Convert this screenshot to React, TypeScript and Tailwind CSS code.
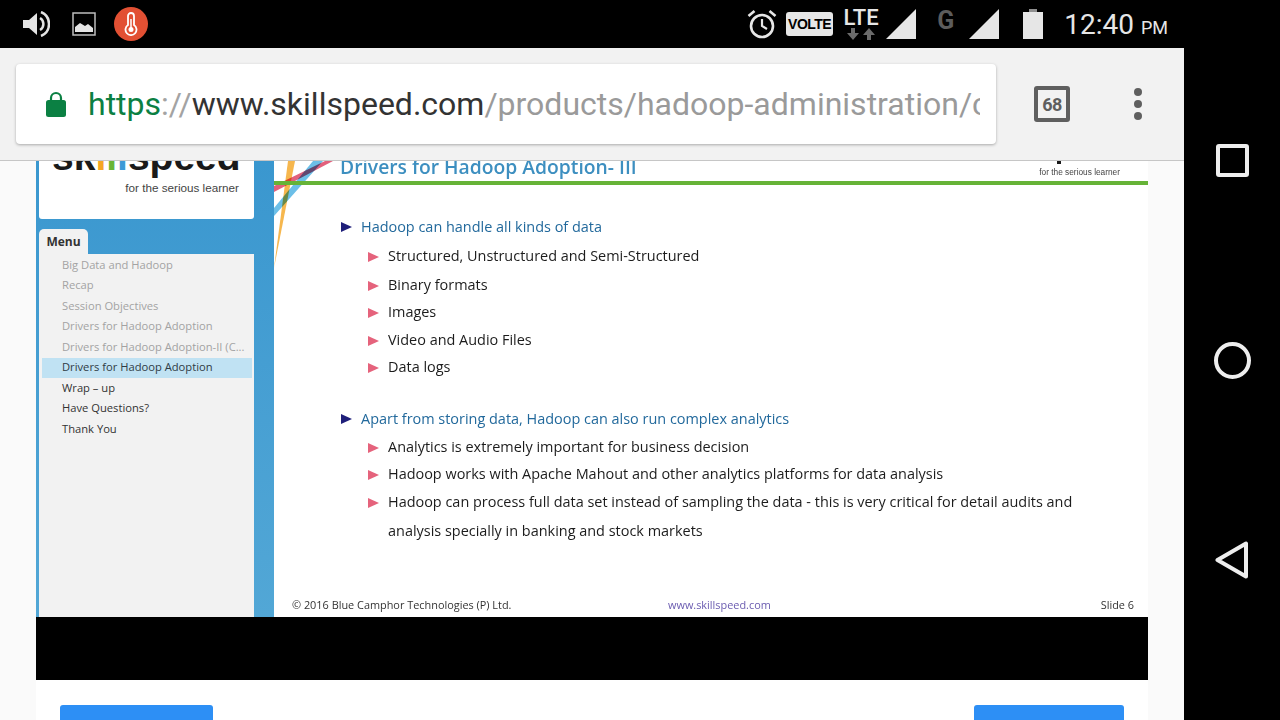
const topics = [
  { label: 'Big Data and Hadoop', cls: 'text-[#a3a3a3]' },
  { label: 'Recap', cls: 'text-[#a3a3a3]' },
  { label: 'Session Objectives', cls: 'text-[#a3a3a3]' },
  { label: 'Drivers for Hadoop Adoption', cls: 'text-[#a3a3a3]' },
  { label: 'Drivers for Hadoop Adoption-II (C...', cls: 'text-[#a3a3a3]' },
  { label: 'Drivers for Hadoop Adoption', cls: 'text-[#2f3b45] bg-[#c0e2f3]' },
  { label: 'Wrap – up', cls: 'text-[#333333]' },
  { label: 'Have Questions?', cls: 'text-[#333333]' },
  { label: 'Thank You', cls: 'text-[#333333]' },
];

function Arrow({ color, className }: { color: string; className?: string }) {
  return (
    <svg width="11" height="10" viewBox="0 0 11 10" className={`shrink-0 ${className ?? ''}`}>
      <path d="M0 0 L11 5 L0 10 Z" fill={color} />
    </svg>
  );
}

function Heading({ text, className }: { text: string; className: string }) {
  return (
    <div className={`flex h-5 items-center gap-[9px] pl-[67px] text-[14.450px] text-[#22699c] ${className}`}>
      <Arrow color="#1f1f7a" />
      <span>{text}</span>
    </div>
  );
}

function Point({ text, className }: { text: string; className: string }) {
  return (
    <div className={`flex h-5 items-center gap-[9px] pl-[94px] text-[14.450px] text-[#1c1c1c] ${className}`}>
      <Arrow color="#e5637c" className="mt-[2px]" />
      <span>{text}</span>
    </div>
  );
}

function StatusBar() {
  return (
    <div className="flex h-12 items-center justify-between bg-black pl-[22px] pr-4">
      <div className="flex items-center">
        <svg width="28" height="26" viewBox="0 0 28 26">
          <path d="M1 9h6l8-7v22l-8-7H1z" fill="#e4e4e4" />
          <path d="M18 7a7 7 0 0 1 0 12" fill="none" stroke="#e4e4e4" strokeWidth="2.5" />
          <path d="M19 1a13 13 0 0 1 0 24" fill="none" stroke="#e4e4e4" strokeWidth="2.5" />
        </svg>
        <svg width="24" height="24" viewBox="0 0 24 24" className="ml-[22px]">
          <rect x="1" y="1" width="22" height="22" fill="none" stroke="#bdbdbd" strokeWidth="1.5" />
          <path d="M3 20v-5l5-4 5 3 3-2 5 4v4z" fill="#e4e4e4" />
        </svg>
        <div className="ml-[18px] flex h-[34px] w-[34px] items-center justify-center rounded-full bg-[#e25033]">
          <svg width="14" height="24" viewBox="0 0 14 24">
            <path d="M4 13V4a3 3 0 0 1 6 0v9a5.5 5.5 0 1 1-6 0z" fill="none" stroke="#fff" strokeWidth="1.8" />
            <circle cx="7" cy="17.500" r="2.500" fill="#fff" />
            <path d="M7 7v9" stroke="#fff" strokeWidth="1.5" />
          </svg>
        </div>
      </div>
      <div className="flex items-center">
        <svg width="30" height="30" viewBox="0 0 30 30">
          <circle cx="15" cy="17" r="11" fill="none" stroke="#e6e6e6" strokeWidth="2.600" />
          <path d="M15 10v7l5 3" fill="none" stroke="#e6e6e6" strokeWidth="2.200" />
          <path d="M1.500 7l6-5M28.500 7l-6-5" stroke="#e6e6e6" strokeWidth="2.600" />
        </svg>
        <div className="ml-[9px] flex h-6 w-[47px] items-center justify-center rounded-[3px] bg-[#e6e6e6] font-['Liberation_Sans',sans-serif] text-[14px] font-bold leading-none tracking-[-0.5px] text-black">
          VOLTE
        </div>
        <div className="ml-[10px] flex w-9 flex-col items-center">
          <span className="font-['Roboto',sans-serif] text-[22px] font-medium leading-[20px] text-[#e6e6e6]">LTE</span>
          <svg width="30" height="13" viewBox="0 0 30 13">
            <path d="M5 0h4v5h4l-6 7-6-7h4zM21 12h4V7h4l-6-7-6 7h4z" fill="#6b6b6b" />
          </svg>
        </div>
        <svg width="30" height="30" viewBox="0 0 30 30" className="ml-[7px]">
          <path d="M0 30 L30 0 V30 Z" fill="#e6e6e6" />
        </svg>
        <span className="ml-[21px] mb-[8px] font-['Roboto',sans-serif] text-[25px] font-bold leading-none text-[#5c5c5c]">G</span>
        <svg width="30" height="30" viewBox="0 0 30 30" className="ml-[15px]">
          <path d="M0 30 L30 0 V30 Z" fill="#e6e6e6" />
        </svg>
        <svg width="20" height="30" viewBox="0 0 20 30" className="ml-6">
          <path d="M6 0h8v3h6v27H0V3h6z" fill="#e6e6e6" />
          <path d="M6 0h8v3H6z" fill="#8f8f8f" />
        </svg>
        <span className="ml-[21px] mt-[2px] font-['Roboto',sans-serif] text-[28px] leading-none text-[#e6e6e6]">12:40</span>
        <span className="ml-[7px] mt-[7px] font-['Roboto',sans-serif] text-[18px] leading-none text-[#e6e6e6]">PM</span>
      </div>
    </div>
  );
}

function Toolbar() {
  return (
    <div className="relative z-10 flex h-[113px] items-start border-b border-[#c6c6c6] bg-[#f2f2f2] pt-4 pl-4">
      <div className="flex h-20 w-[980px] items-center rounded bg-white pl-[30px] pr-4 shadow-[0_1px_3px_rgba(0,0,0,0.3)]">
        <svg width="20" height="26" viewBox="0 0 20 26" className="shrink-0">
          <path d="M5 12V7a5 5 0 0 1 10 0v5" fill="none" stroke="#0b8043" strokeWidth="2.200" />
          <rect x="0" y="9" width="20" height="17" rx="2.500" fill="#0b8043" />
        </svg>
        <div className="ml-[22px] overflow-hidden whitespace-nowrap font-['Roboto',sans-serif] text-[32px] leading-[40px]">
          <span className="text-[#0b8043]">https</span>
          <span className="text-[#a3a3a3]">://</span>
          <span className="text-[#333333]">www.skillspeed.com</span>
          <span className="text-[#9a9a9a]">/products/hadoop-administration/c</span>
        </div>
      </div>
      <div className="ml-[38px] mt-[22px] flex h-9 w-9 items-center justify-center rounded-[3px] border-4 border-[#5f5f5f] font-['Roboto',sans-serif] text-[18px] font-bold tracking-[-0.5px] text-[#5f5f5f]">
        68
      </div>
      <div className="ml-[64px] mt-6 flex flex-col gap-1">
        <div className="h-2 w-2 rounded-full bg-[#5f5f5f]" />
        <div className="h-2 w-2 rounded-full bg-[#5f5f5f]" />
        <div className="h-2 w-2 rounded-full bg-[#5f5f5f]" />
      </div>
    </div>
  );
}

function Sidebar() {
  return (
    <div className="flex w-[238px] shrink-0 flex-col bg-[#3b9ad0] bg-gradient-to-b from-[#3a97cf] to-[#52a7d6] pl-[3px] pr-5 font-['Open_Sans',sans-serif]">
      <div className="flex h-[58px] flex-col items-end overflow-hidden rounded-b-[3px] bg-white pr-[15px]">
        <div className="-mt-[27px] self-start whitespace-nowrap pl-[13px] font-['Liberation_Sans',sans-serif] text-[39px] font-bold leading-[46px] text-[#1a1a1a]">
          sk<span className="text-[#f5a623]">i</span><span className="text-[#6ab536]">l</span><span className="text-[#3d9ad6]">l</span>speed
        </div>
        <div className="mt-[1px] font-['Liberation_Sans',sans-serif] text-[11.700px] leading-[14px] text-[#444444]">for the serious learner</div>
      </div>
      <div className="mt-[10px] flex h-[25px] w-[49px] items-center justify-center rounded-t-[5px] bg-[#f2f2f2] text-[12px] font-bold text-[#333333]">
        Menu
      </div>
      <div className="flex-1 bg-[#f2f2f2] pl-[3px] pr-[2px] pt-[1px]">
        {topics.map((t, i) => (
          <div key={i} className={`flex h-[20.5px] items-center whitespace-nowrap pl-5 text-[11.200px] ${t.cls}`}>
            {t.label}
          </div>
        ))}
      </div>
    </div>
  );
}

function Slide() {
  return (
    <div className="relative isolate flex min-w-0 flex-1 flex-col bg-white font-['Open_Sans',sans-serif]">
      <svg width="70" height="112" viewBox="0 0 70 112" className="absolute left-0 top-0">
        <path d="M0 107 L14 0 H21 Z" fill="#f6b74e" />
        <path d="M0 47 L39 0 H49 L0 55 Z" fill="#6cbfe8" className="mix-blend-multiply" />
        <path d="M0 25 L51 0 H59 L0 31 Z" fill="#e2607c" className="mix-blend-multiply" />
      </svg>
      <div className="absolute left-[783px] top-0 h-[3px] w-1 bg-[#1a1a1a]" />
      <div className="relative flex h-5 items-center justify-between pl-[66px] pr-7">
        <span className="-mt-[8px] text-[19.300px] font-semibold leading-[24px] text-[#3d8fc0]">Drivers for Hadoop Adoption- III</span>
        <span className="mt-[2px] font-['Liberation_Sans',sans-serif] text-[8.300px] text-[#444444]">for the serious learner</span>
      </div>
      <div className="relative h-1 bg-[#66b337]" />
      <div className="relative flex-1 pt-8">
        <Heading text="Hadoop can handle all kinds of data" className="" />
        <Point text="Structured, Unstructured and Semi-Structured" className="mt-[9px]" />
        <Point text="Binary formats" className="mt-[9px]" />
        <Point text="Images" className="mt-[7px]" />
        <Point text="Video and Audio Files" className="mt-2" />
        <Point text="Data logs" className="mt-[7px]" />
        <Heading text="Apart from storing data, Hadoop can also run complex analytics" className="mt-8" />
        <Point text="Analytics is extremely important for business decision" className="mt-2" />
        <Point text="Hadoop works with Apache Mahout and other analytics platforms for data analysis" className="mt-[7px]" />
        <Point text="Hadoop can process full data set instead of sampling the data - this is very critical for detail audits and" className="mt-2" />
        <div className="mt-[9px] flex h-5 items-center pl-[114px] text-[14.450px] text-[#1c1c1c]">analysis specially in banking and stock markets</div>
      </div>
      <div className="flex h-[24px] items-start pl-[18px] pr-[14px] text-[10.900px] leading-[24px] text-[#333333]">
        <span className="w-[376px]">© 2016 Blue Camphor Technologies (P) Ltd.</span>
        <span className="text-[#6a5bb0]">www.skillspeed.com</span>
        <span className="ml-auto">Slide 6</span>
      </div>
    </div>
  );
}

export default function App() {
  return (
    <div className="flex h-[720px] w-[1280px] overflow-hidden bg-black">
      <div className="flex w-[1184px] shrink-0 flex-col">
        <StatusBar />
        <Toolbar />
        <div className="flex min-h-0 flex-1 flex-col bg-[#fafafa] px-9">
          <div className="flex h-[456px] shrink-0">
            <Sidebar />
            <Slide />
          </div>
          <div className="h-[63px] shrink-0 bg-black" />
          <div className="flex flex-1 items-start justify-between bg-white px-6 pt-[25px]">
            <div className="h-[40px] w-[153px] rounded-t-[3px] bg-[#2d8ff5]" />
            <div className="h-[40px] w-[150px] rounded-t-[3px] bg-[#2d8ff5]" />
          </div>
        </div>
      </div>
      <div className="flex w-24 flex-col items-center pt-[60px]">
        <div className="flex h-[200px] items-center">
          <div className="h-[33px] w-[33px] rounded-[3px] border-4 border-[#eeeeee]" />
        </div>
        <div className="flex h-[200px] items-center">
          <div className="h-[37px] w-[37px] rounded-full border-4 border-[#eeeeee]" />
        </div>
        <div className="flex h-[200px] items-center">
          <svg width="34" height="38" viewBox="0 0 34 38">
            <path d="M2.500 19 L31 2.500 V35.500 Z" fill="none" stroke="#eeeeee" strokeWidth="4" strokeLinejoin="round" />
          </svg>
        </div>
      </div>
    </div>
  );
}
